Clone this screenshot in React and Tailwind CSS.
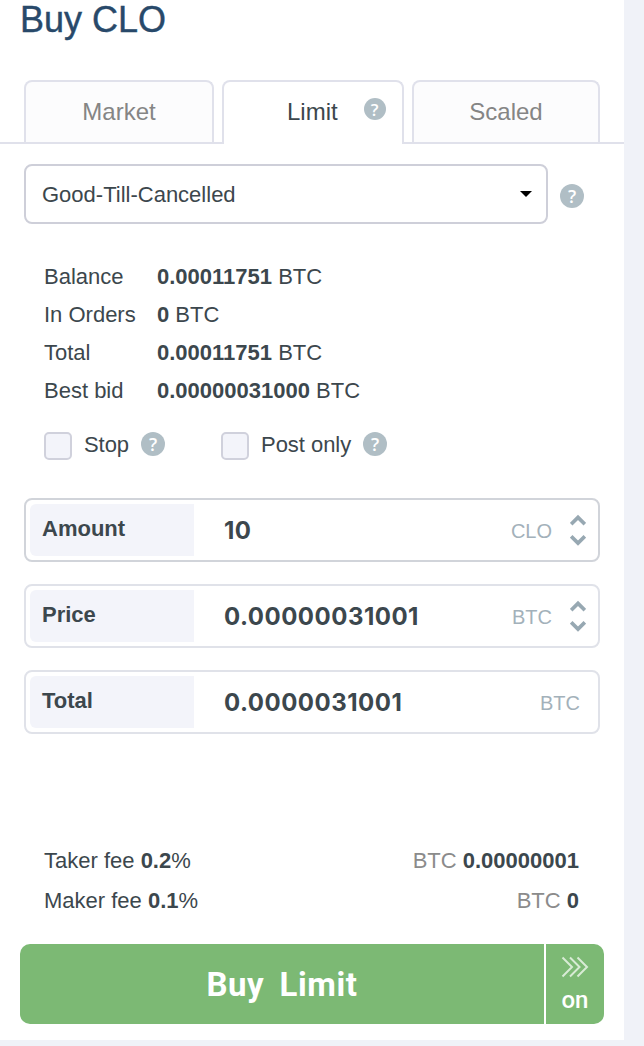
const HelpIcon = ({ className = "size-6 text-[18px]" }) => (
  <span
    className={`inline-flex shrink-0 items-center justify-center rounded-full bg-[#b0bec5] font-['Open_Sans',sans-serif] leading-none font-semibold text-white ${className}`}
  >
    ?
  </span>
);

const Stepper = () => (
  <svg className="ml-[18px] h-8 w-4 text-[#97a8b2]" viewBox="0 0 16 32" fill="none" stroke="currentColor" strokeWidth="3.6">
    <path d="M1.2 10.2 8 3.4l6.8 6.8" />
    <path d="M1.2 22.3 8 29.1l6.8-6.8" />
  </svg>
);

const Tab = ({ children }) => (
  <button className="h-[62px] rounded-t-lg border-2 border-b-0 border-[#e0e1eb] bg-[#fcfcfd] text-center text-[#858585]">
    {children}
  </button>
);

const Check = ({ label }) => (
  <label className="flex items-start">
    <span className="size-7 rounded-[5px] border-2 border-[#d0d1dc] bg-[#f3f4fa]" />
    <span className="mr-3 ml-3 leading-[26px] tracking-[-0.05px]">{label}</span>
    <HelpIcon />
  </label>
);

const Field = ({ label, value, unit, stepper, className = "border-[#e0e2e9]" }) => (
  <div className={`flex h-16 items-center rounded-lg border-2 p-1 ${className}`}>
    <div className="h-[52px] w-[164px] rounded-l-md bg-[#f3f4fa] pl-3 leading-[50px] font-bold">{label}</div>
    <div className="ml-[30px] flex-1 pt-0.5 font-['Inter',sans-serif] text-2xl font-bold tracking-[0.5px]">{value}</div>
    <span className="pt-px text-xl text-[#a3b1ba]">{unit}</span>
    {stepper ? <Stepper /> : null}
    <span className={stepper ? "w-2" : "w-[14px]"} />
  </div>
);

const balances = [
  { label: "Balance", value: "0.00011751" },
  { label: "In Orders", value: "0" },
  { label: "Total", value: "0.00011751" },
  { label: "Best bid", value: "0.00000031000" },
];

const fees = [
  { label: "Taker fee", rate: "0.2", value: "0.00000001" },
  { label: "Maker fee", rate: "0.1", value: "0" },
];

export default function App() {
  return (
    <div className="h-[1046px] w-[644px] overflow-hidden bg-[#f0f2f8] font-['Liberation_Sans',Arial,sans-serif] text-[22px] text-[#3c474d]">
      <div className="h-[1040px] w-[624px] bg-white">
        <h1 className="h-20 pl-5 text-4xl leading-[40px] text-[#28496a] [-webkit-text-stroke:0.4px_#28496a]">Buy CLO</h1>

        <div className="grid h-16 grid-cols-[190px_182px_188px] gap-2 border-b-2 border-[#e0e1eb] px-6 text-2xl">
          <Tab>Market</Tab>
          <button className="flex h-16 items-start rounded-t-lg border-2 border-b-0 border-[#e0e1eb] bg-white pt-4 pl-[63px]">
            <span className="leading-7">Limit</span>
            <HelpIcon className="ml-[26px] size-[22px] text-[17px]" />
          </button>
          <Tab>Scaled</Tab>
        </div>

        <div className="flex items-center gap-3 px-6 pt-5">
          <div className="flex h-[60px] w-[524px] items-center justify-between rounded-lg border-2 border-[#cecfd9] pr-[14px] pl-4">
            <span>Good-Till-Cancelled</span>
            <svg className="h-1.5 w-3" viewBox="0 0 12 6">
              <path d="M0 0h12L6 6z" fill="#000" />
            </svg>
          </div>
          <HelpIcon className="mt-1 size-6 text-[18px]" />
        </div>

        <div className="mt-[33px] px-11">
          {balances.map((row) => (
            <div key={row.label} className="flex h-[38px] items-center">
              <span className="w-[113px]">{row.label}</span>
              <span>
                <b>{row.value}</b> BTC
              </span>
            </div>
          ))}
        </div>

        <div className="mt-[23px] flex h-7 gap-14 px-11">
          <Check label="Stop" />
          <Check label="Post only" />
        </div>

        <div className="mt-[38px] flex flex-col gap-[22px] px-6">
          <Field label="Amount" value="10" unit="CLO" stepper className="border-[#d1d4da]" />
          <Field label="Price" value="0.00000031001" unit="BTC" stepper />
          <Field label="Total" value="0.0000031001" unit="BTC" />
        </div>

        <div className="mt-[106px] pr-[45px] pl-11">
          {fees.map((fee) => (
            <div key={fee.label} className="flex h-10 items-center justify-between">
              <span>
                {fee.label} <b>{fee.rate}</b>%
              </span>
              <span>
                <span className="text-[#8b8b8b]">BTC</span> <b>{fee.value}</b>
              </span>
            </div>
          ))}
        </div>

        <div className="mt-6 ml-5 flex h-20 w-[584px] gap-0.5 overflow-hidden rounded-[10px] text-white">
          <button className="w-[524px] bg-[#7cb974] pt-0.5 font-['Roboto',sans-serif] text-[33px] font-bold tracking-[0.6px] whitespace-pre [word-spacing:-1.2px]">Buy  Limit</button>
          <button className="flex flex-1 flex-col items-center bg-[#7cb974] pt-3 font-['Roboto',sans-serif] text-2xl leading-7 font-medium">
            <svg className="h-[22px] w-7" viewBox="0 0 28 22" fill="none" stroke="#d8ebd5" strokeWidth="2">
              <path d="M1.5 1.5 11 11l-9.5 9.5M9 1.5l9.5 9.5L9 20.5M16.5 1.5 26 11l-9.5 9.5" />
            </svg>
            <span className="mt-2">on</span>
          </button>
        </div>
      </div>
    </div>
  );
}
